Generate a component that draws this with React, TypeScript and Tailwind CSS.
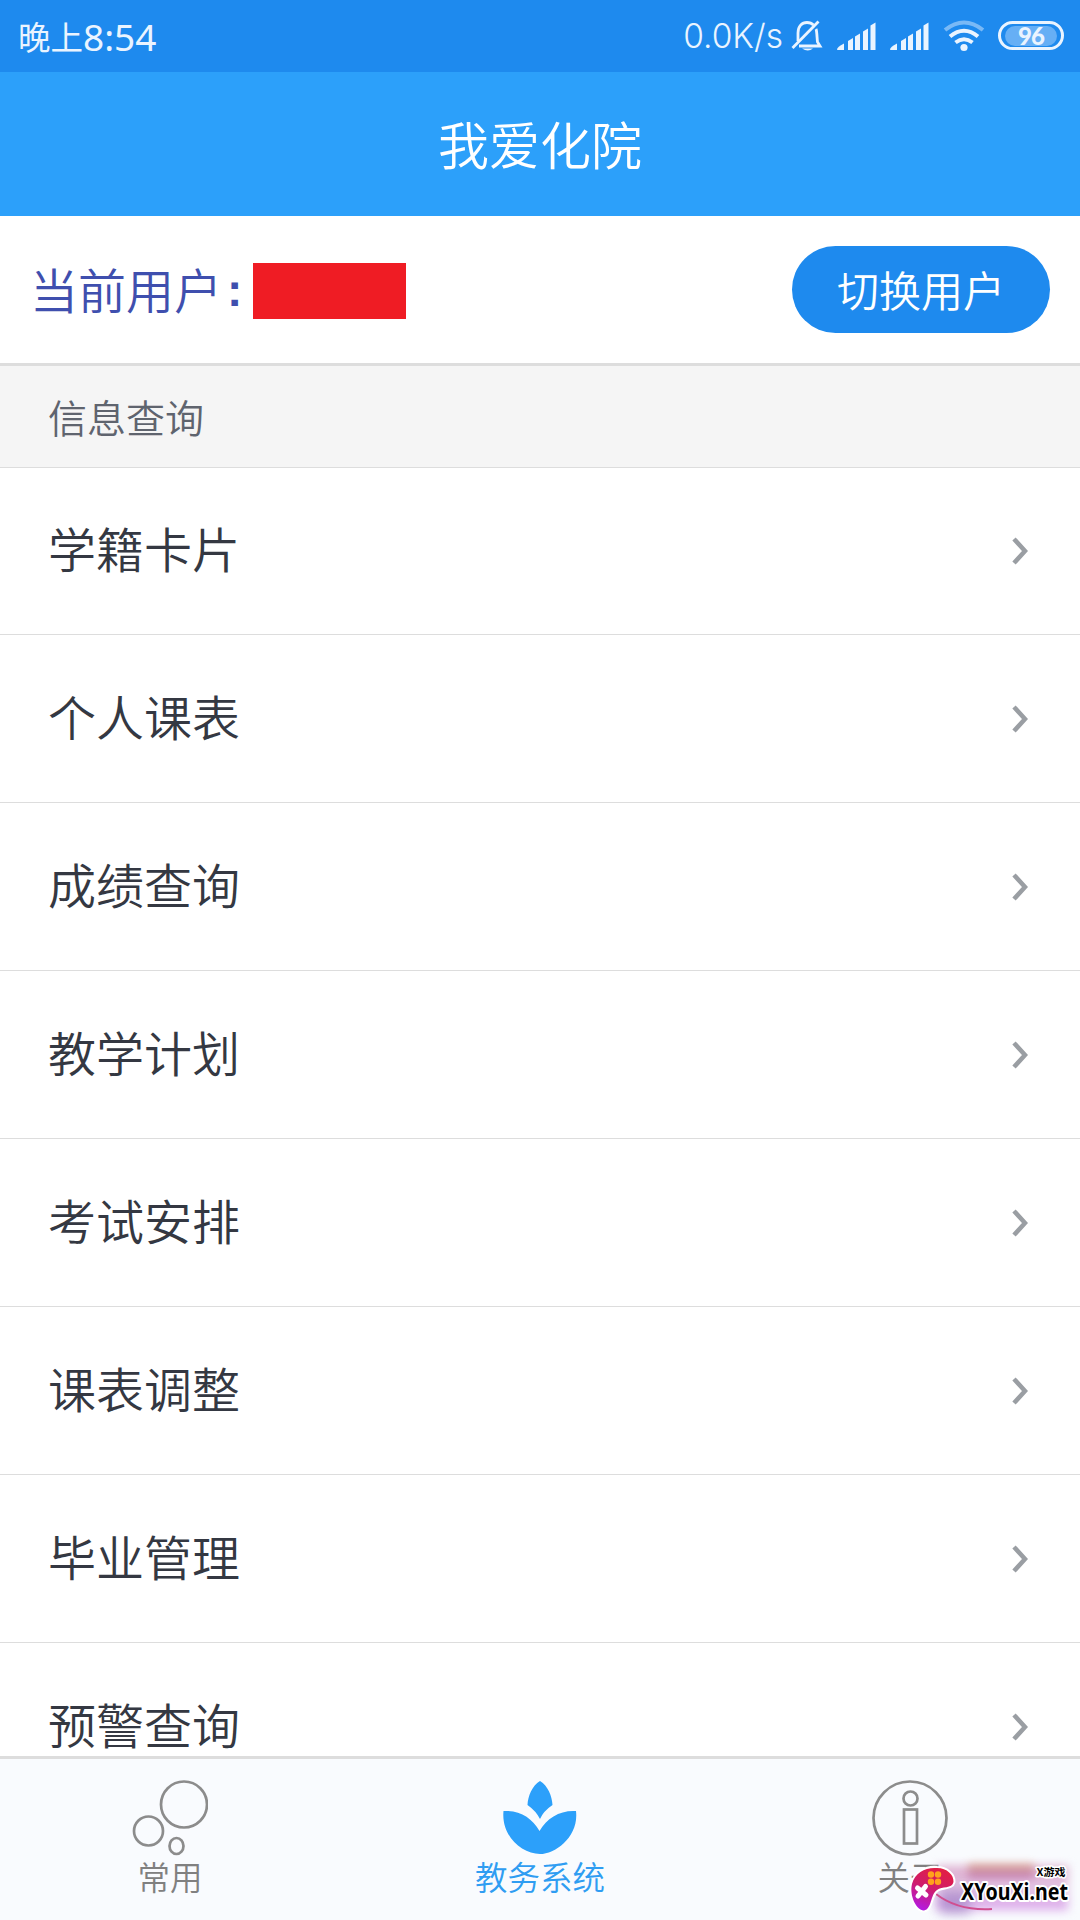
const queryItems = ['学籍卡片', '个人课表', '成绩查询', '教学计划', '考试安排', '课表调整', '毕业管理', '预警查询']

function SignalIcon() {
    return (
        <svg width="40" height="30" viewBox="0 0 40 30" fill="#eaf4ff">
            <path d="M1 28.500 Q1 26 8 22.500 V29 H1.500z" />
            <path d="M12 20 l5 -3 V29 h-5z" />
            <path d="M19 15.500 l5 -3 V29 h-5z" />
            <path d="M27 10.500 l5 -3 V29 h-5z" />
            <path d="M34.500 4.500 l5 -3 V29 h-5z" />
        </svg>
    )
}

function StatusBar() {
    return (
        <div className="flex h-[72px] items-center justify-between bg-[#1e8aee] pl-[18px] pr-4 text-[#eaf4ff]">
            <div className="flex h-full items-center">
                <span className="text-[32.500px] font-normal leading-[70px]">晚上</span>
                <span className="font-['Noto_Sans',sans-serif] text-[37px] font-normal leading-[75px]">8:54</span>
            </div>
            <div className="flex h-full items-center">
                <span className="font-['Inter','Noto_Sans_CJK_SC',sans-serif] text-[33.500px] font-[350] leading-[77px]">0.0K/s</span>
                <svg className="ml-2" width="32" height="34" viewBox="0 0 32 34" fill="none" stroke="#eaf4ff" strokeWidth="2.8">
                    <path d="M7 22 V14 C7 7 11 3.500 16 3.500 C18.500 3.500 20.500 4 22.500 6 M25 10 C26 12 26 20 26.500 23 L29 27 H8" />
                    <path d="M1.500 29 L27.500 2.500" />
                    <path d="M11 29.500 h11 q-5 4 -11 0z" fill="#eaf4ff" stroke="none" />
                </svg>
                <div className="ml-[13px] flex gap-[13px]">
                    <SignalIcon />
                    <SignalIcon />
                </div>
                <svg className="ml-[14px]" width="42" height="34" viewBox="0 0 42 34" fill="none" strokeWidth="4">
                    <path d="M2 11 Q21 -4 40 11" stroke="#79b9f6" />
                    <path d="M7 17.500 Q21 6 35 17.500" stroke="#eaf4ff" />
                    <path d="M12.500 23.500 Q21 17 29.500 23.500" stroke="#eaf4ff" />
                    <circle cx="21" cy="28.500" r="3.600" fill="#eaf4ff" />
                </svg>
                <div className="mb-[1px] ml-[13px] flex h-[29px] w-[66px] items-center rounded-full border-[3px] border-[#eaf4ff] px-[4px]">
                    <span className="flex h-[20px] w-full items-center justify-center rounded-full bg-[#66aff5] font-['Lato',sans-serif] text-[24px] font-black leading-none tracking-[-1px]">
                        96
                    </span>
                </div>
            </div>
        </div>
    )
}

function Watermark() {
    return (
        <div className="absolute bottom-0 right-0 h-[70px] w-[180px] overflow-hidden">
            <div className="absolute left-[36px] top-[16px] h-[44px] w-[132px] bg-linear-to-b from-[#dba9cb] via-[#e3c6e4] to-[#dba6ec] blur-[5px]" />
            <div className="absolute left-[40px] top-[40px] h-[24px] w-[30px] bg-[#9a7fc0] opacity-60 blur-[6px]" />
            <div className="absolute left-[68px] top-[14px] h-[14px] w-[66px] bg-linear-to-b from-[#e2b07c] to-[#b35fae] opacity-80 blur-[4px]" />
            <svg className="absolute left-0 top-0" width="180" height="70" viewBox="0 0 180 70">
                <defs>
                    <linearGradient id="pad" x1="0.7" y1="0" x2="0.3" y2="1">
                        <stop offset="0" stopColor="#e21f42" />
                        <stop offset="0.5" stopColor="#cf1c6c" />
                        <stop offset="1" stopColor="#b41be0" />
                    </linearGradient>
                </defs>
                <path d="M36 44 Q58 61 92 59" fill="none" stroke="#d04f90" strokeWidth="2" />
                <path
                    d="M12 34 C15 22 26 17 37 18 C47 18 54 25 53.500 32 C52 39 42 36 37 40 C30 45 32 59 24 60.500 C17 61 9 46 12 34z"
                    fill="url(#pad)"
                    stroke="#fff"
                    strokeWidth="4"
                    paintOrder="stroke"
                />
                <g fill="#ffa21c">
                    <circle cx="31" cy="24.500" r="3.200" />
                    <circle cx="38" cy="24.500" r="3.200" />
                    <circle cx="31" cy="31.800" r="3.200" />
                    <circle cx="38" cy="31.800" r="3.200" />
                </g>
                <path d="M17.500 38 L26 45 M25.500 36.500 L18 46" stroke="#fff" strokeWidth="5" strokeLinecap="round" />
                <g fill="#000" stroke="#fff" strokeLinejoin="round" paintOrder="stroke">
                    <text x="136.500" y="26" fontSize="10.500" fontWeight="700" strokeWidth="3" textLength="29" lengthAdjust="spacingAndGlyphs" fontFamily="Noto Sans CJK SC">X游戏</text>
                    <text x="61" y="50" fontSize="24" fontWeight="700" strokeWidth="4" textLength="107" lengthAdjust="spacingAndGlyphs" fontFamily="Noto Sans">XYouXi.net</text>
                </g>
            </svg>
        </div>
    )
}

export default function App() {
    return (
        <div className="relative flex h-[1920px] w-[1080px] flex-col overflow-hidden bg-white font-['Noto_Sans_CJK_SC',sans-serif] font-[350]">
            <StatusBar />

            <header className="flex h-36 items-center justify-center bg-[#2ca0fa] pb-[2px] text-white">
                <h1 className="text-[51px] leading-none">我爱化院</h1>
            </header>

            <section className="flex h-[150px] items-center justify-between border-b-[3px] border-[#ddd] pl-[30px] pr-[30px]">
                <div className="flex items-center pt-[2px]">
                    <span className="pb-[5px] text-[48px] leading-none text-[#3f4fae]">当前用户</span>
                    {/* square-dotted colon */}
                    <span className="ml-[5px] w-[26px] pb-[2px] font-['Liberation_Sans',sans-serif] text-[46px] font-bold leading-none text-[#3f4fae]">:</span>
                    <span className="h-14 w-[153px] bg-[#ef1c24]" />
                </div>
                <button className="h-[87px] w-[258px] rounded-full bg-[#1e8aee] pb-[2px] text-[42px] leading-none text-white">切换用户</button>
            </section>

            <main className="flex min-h-0 flex-1 flex-col overflow-hidden">
                <h2 className="flex h-[102px] shrink-0 items-center border-b border-[#ddd] bg-[#f5f5f5] pl-12 text-[39px] leading-none text-[#5f646e]">
                    信息查询
                </h2>
                <ul className="-mt-px">
                    {queryItems.map((item) => (
                        <li key={item} className="flex h-[168px] items-center justify-between border-b border-[#ddd] pl-12 pr-[52px]">
                            <span className="pb-[7px] text-[48px] leading-none text-[#343842]">{item}</span>
                            <svg width="16" height="28" viewBox="0 0 16 28" fill="none" stroke="#9a9ea3" strokeWidth="4.500">
                                <path d="M2 2 L13 14 L2 26" />
                            </svg>
                        </li>
                    ))}
                </ul>
            </main>

            <nav className="flex h-[164px] shrink-0 justify-between border-t-[3px] border-[#ddd] bg-[#f9fbfe] text-[32.500px] leading-none text-[#808080]">
                <a className="flex w-[340px] flex-col items-center pt-[21px]">
                    <svg width="76" height="76" viewBox="0 0 76 76" fill="none" stroke="#8c8c8c" strokeWidth="2.700">
                        <circle cx="52" cy="24.500" r="23" />
                        <circle cx="16.500" cy="51" r="14.500" />
                        <ellipse cx="44.500" cy="66" rx="7" ry="8" />
                    </svg>
                    <span className="mt-[4px]">常用</span>
                </a>
                <a className="flex flex-col items-center pt-[21px] text-[#2f9df2]">
                    <svg width="76" height="76" viewBox="0 0 76 76" fill="#2ca0fa">
                        <path d="M38 1 C46 6 50 16 50.500 25 Q41.500 31 38 39 Q34 31 25.500 25 C26 16 30 6 38 1z" />
                        <path d="M37.500 51 C45 38 58 30 74 31 C77 56 54 74 38 74 C20 74 -1 56 1.500 31 C18 30 30 38 37.500 51z" />
                    </svg>
                    <span className="mt-[4px]">教务系统</span>
                </a>
                <a className="flex w-[340px] flex-col items-center pt-[21px]">
                    <svg width="76" height="76" viewBox="0 0 76 76" fill="none" stroke="#8c8c8c" strokeWidth="2.700">
                        <circle cx="38" cy="38" r="36.500" />
                        <circle cx="38.500" cy="18.500" r="7" />
                        <rect x="32" y="29.500" width="13" height="34" />
                    </svg>
                    <span className="mt-[4px]">关于</span>
                </a>
            </nav>

            <Watermark />
        </div>
    )
}
